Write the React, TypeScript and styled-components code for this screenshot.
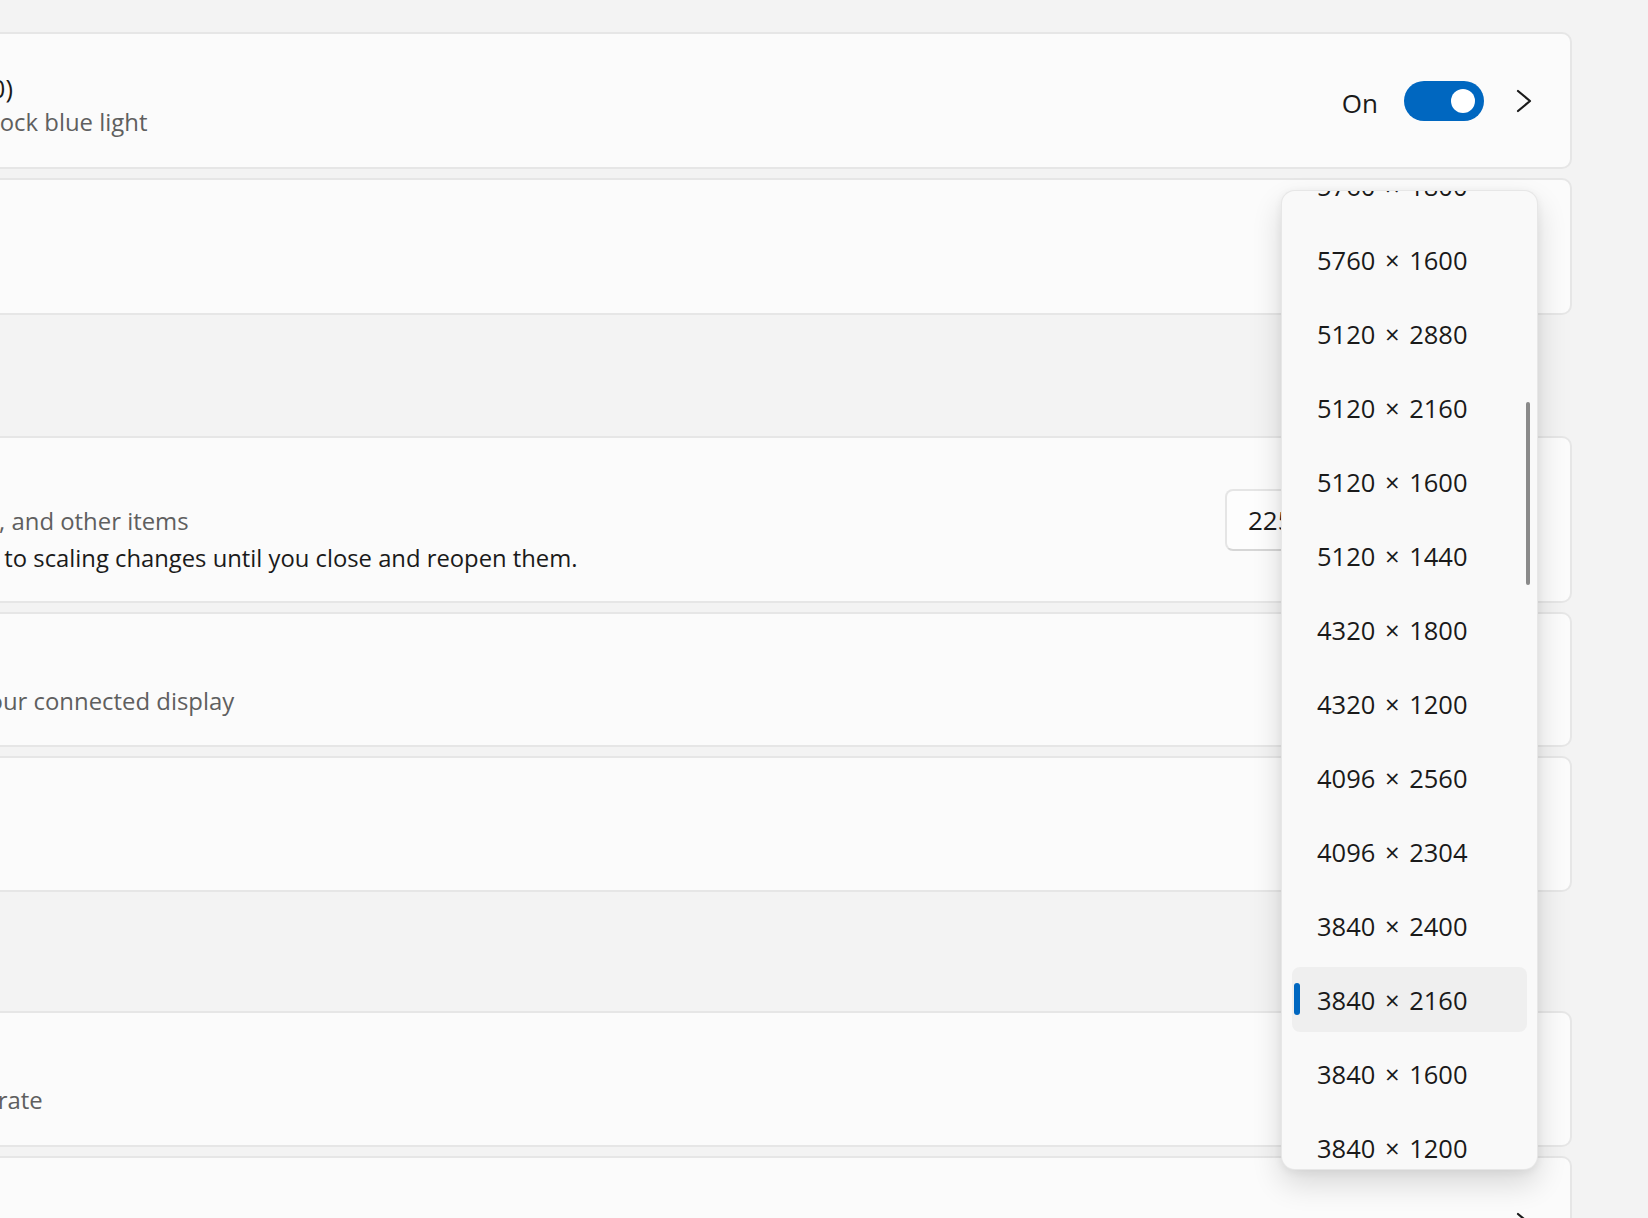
import React from "react";
import styled, { createGlobalStyle } from "styled-components";
import { Moon, Sun, Maximize2, Monitor, RotateCw, Settings, Cpu } from "lucide-react";

const GlobalStyle = createGlobalStyle`
  html, body { margin: 0; padding: 0; background: #f3f3f3; overflow: hidden; }
  body { font-family: "Segoe UI", "Open Sans", "Noto Sans", sans-serif; color: #1a1a1a; }
  * { box-sizing: border-box; }
`;

const Viewport = styled.div`
  position: relative;
  width: 1648px;
  height: 1218px;
  overflow: hidden;
  background: #f3f3f3;
`;

const Column = styled.div`
  display: flex;
  flex-direction: column;
  gap: 9px;
  width: 2012px;
  margin-left: -440px;
  padding-top: 32px;
`;

const Card = styled.div<{ $h: number }>`
  display: flex;
  align-items: center;
  flex-shrink: 0;
  height: ${(p) => p.$h}px;
  padding: 0 29px 0 42px;
  background: #fbfbfb;
  border: 2px solid #e6e6e6;
  border-radius: 10px;
`;

const IconBox = styled.div`
  width: 34px;
  height: 34px;
  margin-right: 42px;
  display: flex;
  align-items: center;
  justify-content: center;
  color: #1a1a1a;
  flex-shrink: 0;
`;

const TextBlock = styled.div<{ $shift?: number }>`
  display: flex;
  flex-direction: column;
  padding-top: ${(p) => p.$shift ?? 6}px;
  white-space: nowrap;
`;

const Title = styled.div`
  font-size: 25.5px;
  line-height: 34px;
  color: #1a1a1a;
`;

const Sub = styled.div`
  font-size: 23.9px;
  line-height: 33px;
  color: #5f5f5f;
`;

const Info = styled.div`
  font-size: 23.8px;
  line-height: 34px;
  margin-top: 4px;
  color: #1a1a1a;
`;

const Right = styled.div`
  margin-left: auto;
  display: flex;
  align-items: center;
`;

const StateLabel = styled.span`
  font-size: 26px;
  line-height: 34px;
  margin-top: 5px;
  margin-right: 26px;
  color: #1a1a1a;
`;

const Toggle = styled.div<{ $on: boolean }>`
  position: relative;
  width: 80px;
  height: 40px;
  border-radius: 20px;
  background: ${(p) => (p.$on ? "#0067c0" : "transparent")};
  margin-right: 23px;
  display: flex;
  align-items: center;
  justify-content: ${(p) => (p.$on ? "flex-end" : "flex-start")};
  padding: 0 9px;
`;

const Knob = styled.div`
  width: 24px;
  height: 24px;
  border-radius: 50%;
  background: #ffffff;
`;

const ChevronBox = styled.svg`
  width: 34px;
  height: 34px;
  flex-shrink: 0;
`;

const Combo = styled.div<{ $w: number; $gap: number }>`
  width: ${(p) => p.$w}px;
  height: 62px;
  margin-right: ${(p) => p.$gap}px;
  background: #fdfdfd;
  border: 2px solid #e5e5e5;
  border-bottom-color: #d6d6d6;
  border-radius: 8px;
  display: flex;
  align-items: center;
  padding-left: 21px;
  font-size: 26px;
  color: #1a1a1a;
  white-space: nowrap;
`;

const SectionHeader = styled.div<{ $h: number }>`
  height: ${(p) => p.$h}px;
  flex-shrink: 0;
  display: flex;
  align-items: flex-end;
  padding-bottom: 10px;
  font-size: 25px;
  font-weight: 600;
  color: #1a1a1a;
`;

const Menu = styled.div`
  position: absolute;
  left: 1281px;
  top: 190px;
  width: 257px;
  height: 980px;
  background: #f9f9f9;
  border: 1px solid rgba(0, 0, 0, 0.07);
  border-radius: 14px;
  box-shadow: 0 14px 30px rgba(0, 0, 0, 0.14), 0 2px 8px rgba(0, 0, 0, 0.06);
  overflow: hidden;
`;

const MenuList = styled.div`
  display: flex;
  flex-direction: column;
  transform: translateY(-42px);
`;

const MenuItem = styled.div`
  height: 74px;
  flex-shrink: 0;
  padding: 4px 10px 5px 10px;
`;

const ItemInner = styled.div<{ $selected: boolean }>`
  position: relative;
  height: 65px;
  border-radius: 8px;
  display: flex;
  align-items: center;
  padding-left: 25px;
  font-size: 25.5px;
  word-spacing: 3px;
  color: #1a1a1a;
  white-space: nowrap;
  background: ${(p) => (p.$selected ? "#efefef" : "transparent")};
`;

const Indicator = styled.span`
  position: absolute;
  left: 2px;
  top: 16px;
  width: 6px;
  height: 32px;
  border-radius: 3px;
  background: #0067c0;
`;

const ScrollThumb = styled.div`
  position: absolute;
  left: 244px;
  top: 211px;
  width: 4px;
  height: 183px;
  border-radius: 2px;
  background: #8a8a8a;
`;

const Chevron = () => (
  <ChevronBox viewBox="0 0 34 34">
    <path d="M11 7 L23 17 L11 27" fill="none" stroke="#1a1a1a" strokeWidth="2.2" strokeLinecap="round" strokeLinejoin="round" />
  </ChevronBox>
);

const resolutions = [
  "5760 × 1800",
  "5760 × 1600",
  "5120 × 2880",
  "5120 × 2160",
  "5120 × 1600",
  "5120 × 1440",
  "4320 × 1800",
  "4320 × 1200",
  "4096 × 2560",
  "4096 × 2304",
  "3840 × 2400",
  "3840 × 2160",
  "3840 × 1600",
  "3840 × 1200",
  "3840 × 1080",
];

export default function App() {
  return (
    <>
      <GlobalStyle />
      <Viewport>
        <Column>
          <Card $h={137}>
            <IconBox><Moon size={30} strokeWidth={1.6} /></IconBox>
            <TextBlock $shift={8}>
              <Title>Night light (turns off at 7:00)</Title>
              <Sub>Use warmer colors to help block blue light</Sub>
            </TextBlock>
            <Right>
              <StateLabel>On</StateLabel>
              <Toggle $on={true}><Knob /></Toggle>
              <Chevron />
            </Right>
          </Card>

          <Card $h={137}>
            <IconBox><Sun size={30} strokeWidth={1.6} /></IconBox>
            <TextBlock>
              <Title>HDR</Title>
              <Sub>More about HDR</Sub>
            </TextBlock>
            <Right>
              <Chevron />
            </Right>
          </Card>

          <SectionHeader $h={103}>Scale &amp; layout</SectionHeader>

          <Card $h={167}>
            <IconBox><Maximize2 size={30} strokeWidth={1.6} /></IconBox>
            <TextBlock>
              <Title>Scale</Title>
              <Sub>Change the size of text, apps, and other items</Sub>
              <Info>Some apps may not respond to scaling changes until you close and reopen them.</Info>
            </TextBlock>
            <Right>
              <Combo $w={262} $gap={20}>225% (Recommended)</Combo>
              <Chevron />
            </Right>
          </Card>

          <Card $h={135}>
            <IconBox><Monitor size={30} strokeWidth={1.6} /></IconBox>
            <TextBlock $shift={8}>
              <Title>Display resolution</Title>
              <Sub>Adjust the resolution to fit your connected display</Sub>
            </TextBlock>
            <Right>
              <Combo $w={250} $gap={8}>3840 × 2160</Combo>
            </Right>
          </Card>

          <Card $h={136}>
            <IconBox><RotateCw size={30} strokeWidth={1.6} /></IconBox>
            <TextBlock>
              <Title>Display orientation</Title>
            </TextBlock>
            <Right>
              <Combo $w={210} $gap={8}>Landscape</Combo>
            </Right>
          </Card>

          <SectionHeader $h={101}>Related settings</SectionHeader>

          <Card $h={136}>
            <IconBox><Settings size={30} strokeWidth={1.6} /></IconBox>
            <TextBlock>
              <Title>Advanced display</Title>
              <Sub>Display information, refresh rate</Sub>
            </TextBlock>
            <Right>
              <Chevron />
            </Right>
          </Card>

          <Card $h={136}>
            <IconBox><Cpu size={30} strokeWidth={1.6} /></IconBox>
            <TextBlock>
              <Title>Graphics</Title>
            </TextBlock>
            <Right>
              <Chevron />
            </Right>
          </Card>
        </Column>

        <Menu>
          <MenuList>
            {resolutions.map((r) => {
              const selected = r === "3840 × 2160";
              return (
                <MenuItem key={r}>
                  <ItemInner $selected={selected}>
                    {selected && <Indicator />}
                    {r}
                  </ItemInner>
                </MenuItem>
              );
            })}
          </MenuList>
          <ScrollThumb />
        </Menu>
      </Viewport>
    </>
  );
}
